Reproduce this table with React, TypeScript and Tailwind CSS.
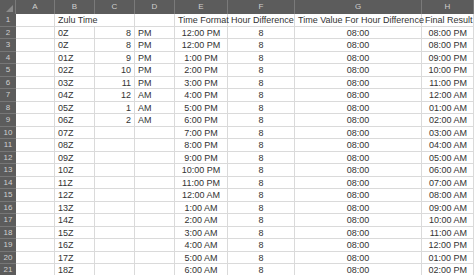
const cols = ["A", "B", "C", "D", "E", "F", "G", "H"];

const cValues = ["8", "8", "9", "10", "11", "12", "1", "2"];
const dValues = ["PM", "PM", "PM", "PM", "PM", "AM", "AM", "AM"];

function fmt12(h: number, pad: boolean) {
  const ampm = h >= 12 ? "PM" : "AM";
  let hh = h % 12;
  if (hh === 0) hh = 12;
  const s = pad ? String(hh).padStart(2, "0") : String(hh);
  return `${s}:00 ${ampm}`;
}

interface Row {
  b: string;
  c: string;
  d: string;
  e: string;
  f: string;
  g: string;
  h: string;
}

const rows: Row[] = Array.from({ length: 20 }, (_, i) => {
  const n = i + 2;
  const z = n <= 3 ? 0 : n - 3;
  const b = n <= 3 ? "0Z" : `${String(z).padStart(2, "0")}Z`;
  const eHour = (12 + z) % 24;
  const hHour = (20 + z) % 24;
  return {
    b,
    c: cValues[i] ?? "",
    d: dValues[i] ?? "",
    e: fmt12(eHour, false),
    f: "8",
    g: "08:00",
    h: fmt12(hHour, true),
  };
});

const grid =
  "grid grid-cols-[16px_39px_40px_40px_40px_53px_67px_127px_52px]";
const cell =
  "border-r border-b border-[#dadada] h-[12.5px] leading-[12px] px-[3px] whitespace-nowrap";
const rowHead =
  "h-[12.5px] bg-[#5c5c5c] text-[#cfcfcf] text-[8px] leading-[12px] text-center border-b border-[#777]";

export default function App() {
  return (
    <div className="w-[474px] h-[275px] overflow-hidden bg-white text-[9px] text-[#333] font-['Liberation_Sans',sans-serif]">
      <div className={`${grid} h-[14px] bg-[#5c5c5c] text-[#cfcfcf] text-[8px]`}>
        <div className="relative border-r border-[#7a7a7a]">
          <div className="absolute right-[2px] bottom-[2px] w-0 h-0 border-l-[7px] border-l-transparent border-b-[7px] border-b-[#8a8a8a]" />
        </div>
        {cols.map((c) => (
          <div
            key={c}
            className="flex items-center justify-center border-r border-[#7a7a7a] leading-[14px]"
          >
            {c}
          </div>
        ))}
      </div>

      <div className={grid}>
        <div className={rowHead}>1</div>
        <div className={cell} />
        <div className={`${cell} border-r-0`}>Zulu Time</div>
        <div className={cell} />
        <div className={cell} />
        <div className={`${cell} text-center`}>Time Format</div>
        <div className={`${cell} text-center`}>Hour Difference</div>
        <div className={`${cell} text-center`}>Time Value For Hour Difference</div>
        <div className={`${cell} text-center px-0`}>Final Result</div>

        {rows.map((r, i) => (
          <Line key={i} n={i + 2} r={r} />
        ))}
      </div>
    </div>
  );
}

function Line({ n, r }: { n: number; r: Row }) {
  return (
    <>
      <div className={rowHead}>{n}</div>
      <div className={cell} />
      <div className={cell}>{r.b}</div>
      <div className={`${cell} text-right`}>{r.c}</div>
      <div className={cell}>{r.d}</div>
      <div className={`${cell} text-center`}>{r.e}</div>
      <div className={`${cell} text-center`}>{r.f}</div>
      <div className={`${cell} text-center`}>{r.g}</div>
      <div className={`${cell} text-right pr-[6px]`}>{r.h}</div>
    </>
  );
}
